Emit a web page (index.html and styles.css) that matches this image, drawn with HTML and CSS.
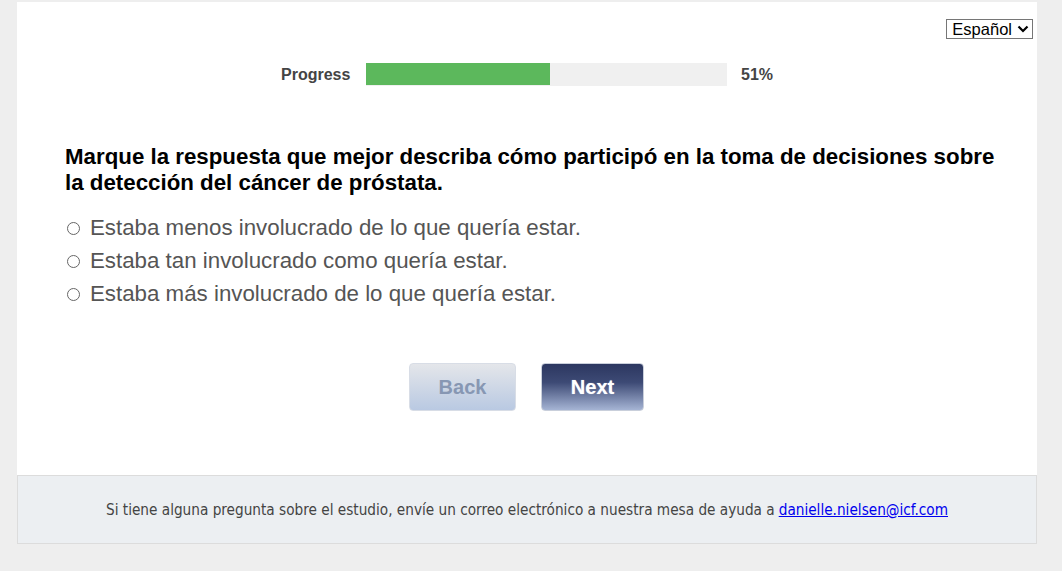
FILE: index.html
```html
<!DOCTYPE html>
<html>
<head>
<meta charset="utf-8">
<link rel="stylesheet" href="styles.css">
</head>
<body>
<div class="page">
  <main class="card">
    <div class="lang-row">
      <div class="lang-select">Español <svg width="12" height="8" viewBox="0 0 12 8"><path d="M1.5 1.5 L6 6 L10.5 1.5" fill="none" stroke="#000" stroke-width="2.2"/></svg></div>
    </div>
    <div class="progress-row">
      <span class="progress-label">Progress</span>
      <div class="progress-track"><div class="progress-fill" style="width:51%"></div></div>
      <span class="progress-pct">51%</span>
    </div>
    <h1 class="question">Marque la respuesta que mejor describa cómo participó en la toma de decisiones sobre la detección del cáncer de próstata.</h1>
    <ul class="options">
      <li><span class="radio"></span>Estaba menos involucrado de lo que quería estar.</li>
      <li><span class="radio"></span>Estaba tan involucrado como quería estar.</li>
      <li><span class="radio"></span>Estaba más involucrado de lo que quería estar.</li>
    </ul>
    <div class="nav">
      <button class="btn btn-back">Back</button>
      <button class="btn btn-next">Next</button>
    </div>
  </main>
  <footer class="footer">
    Si tiene alguna pregunta sobre el estudio, envíe un correo electrónico a nuestra mesa de ayuda a <a href="#">danielle.nielsen@icf.com</a>
  </footer>
</div>
</body>
</html>
```
FILE: styles.css
```css
html, body {
  margin: 0;
  padding: 0;
  background: #eeeeee;
  font-family: "Liberation Sans", Arial, sans-serif;
}
.page {
  margin: 2px 25px 0 17px;
  width: 1020px;
}
.card {
  background: #fff;
  height: 473px;
  padding: 17px 0 0 0;
  box-sizing: border-box;
}
.lang-row {
  display: flex;
  justify-content: flex-end;
  padding-right: 4px;
}
.lang-select {
  display: flex;
  align-items: center;
  gap: 5px;
  border: 1px solid #767676;
  padding: 0 3px 0 5px;
  font-size: 16.5px;
  color: #000;
  box-sizing: border-box;
  height: 20px;
  line-height: 18px;
}
.progress-row {
  display: flex;
  align-items: center;
  margin-top: 24px;
  margin-left: 264px;
  height: 23px;
}
.progress-label {
  font-size: 16px;
  font-weight: bold;
  color: #444;
  width: 85px;
}
.progress-track {
  width: 361px;
  height: 23px;
  background: #f0f0f0;
}
.progress-fill {
  height: 22px;
  background: #5cb85c;
  width: 51%;
}
.progress-pct {
  font-size: 16px;
  font-weight: bold;
  color: #444;
  margin-left: 14px;
}
.question {
  margin: 58px 30px 0 48px;
  max-width: 935px;
  font-size: 22.3px;
  line-height: 26px;
  font-weight: bold;
  color: #000;
}
.options {
  list-style: none;
  margin: 15px 0 0 48px;
  padding: 0;
}
.options li {
  display: flex;
  align-items: center;
  font-size: 22.3px;
  color: #555;
  height: 33px;
}
.radio {
  border: 1px solid #666;
  border-radius: 50%;
  margin: 1px 10px 0 2px;
  box-sizing: border-box;
  width: 13px;
  height: 13px;
}
.nav {
  display: flex;
  justify-content: flex-start;
  gap: 25px;
  margin: 53px 0 0 392px;
}
.btn {
  height: 48px;
  border-radius: 4px;
  font-family: "Liberation Sans", Arial, sans-serif;
  font-size: 20px;
  font-weight: bold;
  padding: 0;
}
.btn-back {
  width: 107px;
  border: 1px solid #d8dde6;
  background: linear-gradient(#e4e6ea, #b9c9e2);
  color: #8797b3;
}
.btn-next {
  width: 103px;
  border: 1px solid #c9cfdb;
  background: linear-gradient(#2c3760 0%, #3d4a75 40%, #a5b4d4 100%);
  color: #fff;
  text-shadow: 0 0 1px rgba(255,255,255,0.6);
}
.footer {
  background: #eceff2;
  border: 1px solid #dcdcdc;
  height: 69px;
  box-sizing: border-box;
  display: flex;
  align-items: center;
  justify-content: center;
  font-family: "Liberation Sans Narrow", "DejaVu Sans Condensed", sans-serif;
  font-size: 15.2px;
  color: #444;
  padding-top: 1px;
}
.footer a {
  color: #0000ee;
  margin-left: 4px;
}
```
